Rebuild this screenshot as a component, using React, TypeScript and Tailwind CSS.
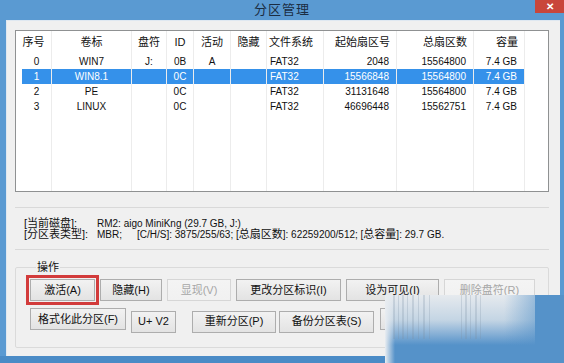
import React from "react";

type Col = { title: string; w: number; align: "center" | "left" | "right" };

const cols: Col[] = [
  { title: "序号", w: 36, align: "center" },
  { title: "卷标", w: 80, align: "center" },
  { title: "盘符", w: 35, align: "center" },
  { title: "ID", w: 27, align: "center" },
  { title: "活动", w: 37, align: "center" },
  { title: "隐藏", w: 36, align: "center" },
  { title: "文件系统", w: 57, align: "left" },
  { title: "起始扇区号", w: 73, align: "right" },
  { title: "总扇区数", w: 77, align: "right" },
  { title: "容量", w: 51, align: "right" },
];

const rows = [
  ["0", "WIN7", "J:", "0B", "A", "", "FAT32", "2048", "15564800", "7.4 GB"],
  ["1", "WIN8.1", "", "0C", "", "", "FAT32", "15566848", "15564800", "7.4 GB"],
  ["2", "PE", "", "0C", "", "", "FAT32", "31131648", "15564800", "7.4 GB"],
  ["3", "LINUX", "", "0C", "", "", "FAT32", "46696448", "15562751", "7.4 GB"],
];

const SEL = 1;

// 水印上的竖条纹 (x 偏移, 宽度)
const streaks = [[8, 2], [13, 1], [17, 2], [22, 1], [27, 2], [33, 1], [38, 2], [44, 1], [76, 1], [80, 2], [85, 1], [90, 2], [95, 1]];

function Btn({ label, w, off, red }: { label: string; w: number; off?: boolean; red?: boolean }) {
  return (
    <button
      className={
        "h-[22px] shrink-0 border bg-gradient-to-b text-[11px] leading-none " +
        (off ? "border-[#d6d6d6] text-[#a6a6a6] from-[#f4f4f4] to-[#f1f1f1]" : "border-[#adadad] text-[#111] from-[#f2f2f2] to-[#e3e3e3]") +
        (red ? " outline-[3px] outline-solid outline-[#d23b3b] outline-offset-[1px]" : "")
      }
      style={{ width: w }}
    >
      {label}
    </button>
  );
}

export default function App() {
  return (
    <div className="relative w-[564px] h-[363px] overflow-hidden bg-[#5a9ad2] flex flex-col font-['Liberation_Sans','Noto_Sans_CJK_SC',sans-serif] text-[#111]">
      {/* 标题栏 */}
      <div className="relative h-[20px] shrink-0 flex items-center justify-center">
        <span className="text-[13px] text-[#1b2d42] tracking-[1px]">分区管理</span>
        <div className="absolute right-0 top-0 w-[29px] h-[13px] bg-[#c9463b] flex items-center justify-center text-white text-[10px] font-bold leading-none">
          ✕
        </div>
      </div>

      <div className="flex flex-1">
        <div className="w-[6px] shrink-0" />
        <div className="flex-1 bg-[#f0f0f0] border-t border-l border-[#dfe8f1] flex flex-col pt-[9px] pl-[8px] pr-[11px]">
          {/* 分区列表 */}
          <div className="h-[162px] shrink-0 border border-[#8f9192] bg-white flex text-[10px]">
            {cols.map((c, ci) => (
              <div key={c.title} className="flex flex-col border-r border-[#ececec]" style={{ width: c.w }}>
                <div
                  className={
                    "h-[23px] flex items-center text-[11px] " +
                    (c.align === "center" ? "justify-center" : c.align === "left" ? "justify-start pl-[2px]" : "justify-end pr-[6px]")
                  }
                >
                  {c.title}
                </div>
                {rows.map((r, ri) => (
                  <div key={ri} className={"h-[15px] flex " + (ci === 0 ? "pl-[6px]" : "")}>
                    <div
                      className={
                        "flex-1 flex items-center leading-none " +
                        (ri === SEL ? "bg-[#3591ea] text-white " : "") +
                        (c.align === "center" ? "justify-center" : c.align === "left" ? "justify-start pl-[3px]" : "justify-end pr-[7px]")
                      }
                    >
                      {r[ci]}
                    </div>
                  </div>
                ))}
              </div>
            ))}
            <div className="flex-1" />
          </div>

          {/* 磁盘信息 */}
          <div className="mt-[15px] h-[43px] shrink-0 border-y border-[#d9d9d9] flex flex-col justify-center pl-[9px] text-[10px] leading-[11px]">
            <div className="flex">
              <span className="w-[73px] text-[11px]">[当前磁盘]:</span>
              <span>RM2: aigo MiniKng (29.7 GB, J:)</span>
            </div>
            <div className="flex">
              <span className="w-[73px] text-[11px]">[分区表类型]:</span>
              <span className="w-[40px]">MBR;</span>
              <span>
                [C/H/S]: 3875/255/63; [<span className="text-[11px]">总扇区数</span>]: 62259200/512; [
                <span className="text-[11px]">总容量</span>]: 29.7 GB.
              </span>
            </div>
          </div>

          {/* 操作 */}
          <fieldset className="mt-[10px] border border-[#dadada] rounded-[2px] pl-[14px] pt-[5px] pb-[11px]">
            <legend className="ml-[6px] px-[1px] text-[11px] leading-[14px]">操作</legend>
            <div className="flex flex-col gap-[7px]">
              <div className="flex gap-[5px]">
                <Btn label="激活(A)" w={65} red />
                <Btn label="隐藏(H)" w={62} />
                <Btn label="显现(V)" w={64} off />
                <Btn label="更改分区标识(I)" w={105} />
                <Btn label="设为可见(I)" w={93} />
                <Btn label="删除盘符(R)" w={91} off />
              </div>
              <div className="flex">
                <Btn label="格式化此分区(F)" w={96} />
                <div className="ml-[5px]"><Btn label="U+ V2" w={45} /></div>
                <div className="ml-[16px]"><Btn label="重新分区(P)" w={84} /></div>
                <div className="ml-[3px]"><Btn label="备份分区表(S)" w={95} /></div>
                <div className="ml-[6px]"><Btn label="" w={90} /></div>
              </div>
            </div>
          </fieldset>
        </div>
        <div className="w-[4px] shrink-0" />
      </div>
      <div className="h-[7px] shrink-0 bg-[#4a8bc6]" />

      {/* 水印 */}
      <div className="absolute left-[385px] top-[295px] w-[179px] h-[68px] bg-[#5592c9] overflow-hidden">
        <div className="absolute left-0 top-0 w-[150px] h-[50px] bg-gradient-to-b from-[#e6eaee] via-[#c4d5e4] to-[#5592c9]" />
        <div className="absolute right-0 top-0 w-[60px] h-[50px] bg-gradient-to-r from-[#5592c9]/0 to-[#5592c9]" />
        <div className="absolute left-0 top-0 w-[10px] h-[68px] bg-gradient-to-r from-[#e9edf1] to-[#e9edf1]/0" />
        {streaks.map(([x, w], i) => (
          <div key={i} className="absolute top-0 h-[44px] bg-[#7c8ea3] opacity-25" style={{ left: x, width: w }} />
        ))}
      </div>
    </div>
  );
}
